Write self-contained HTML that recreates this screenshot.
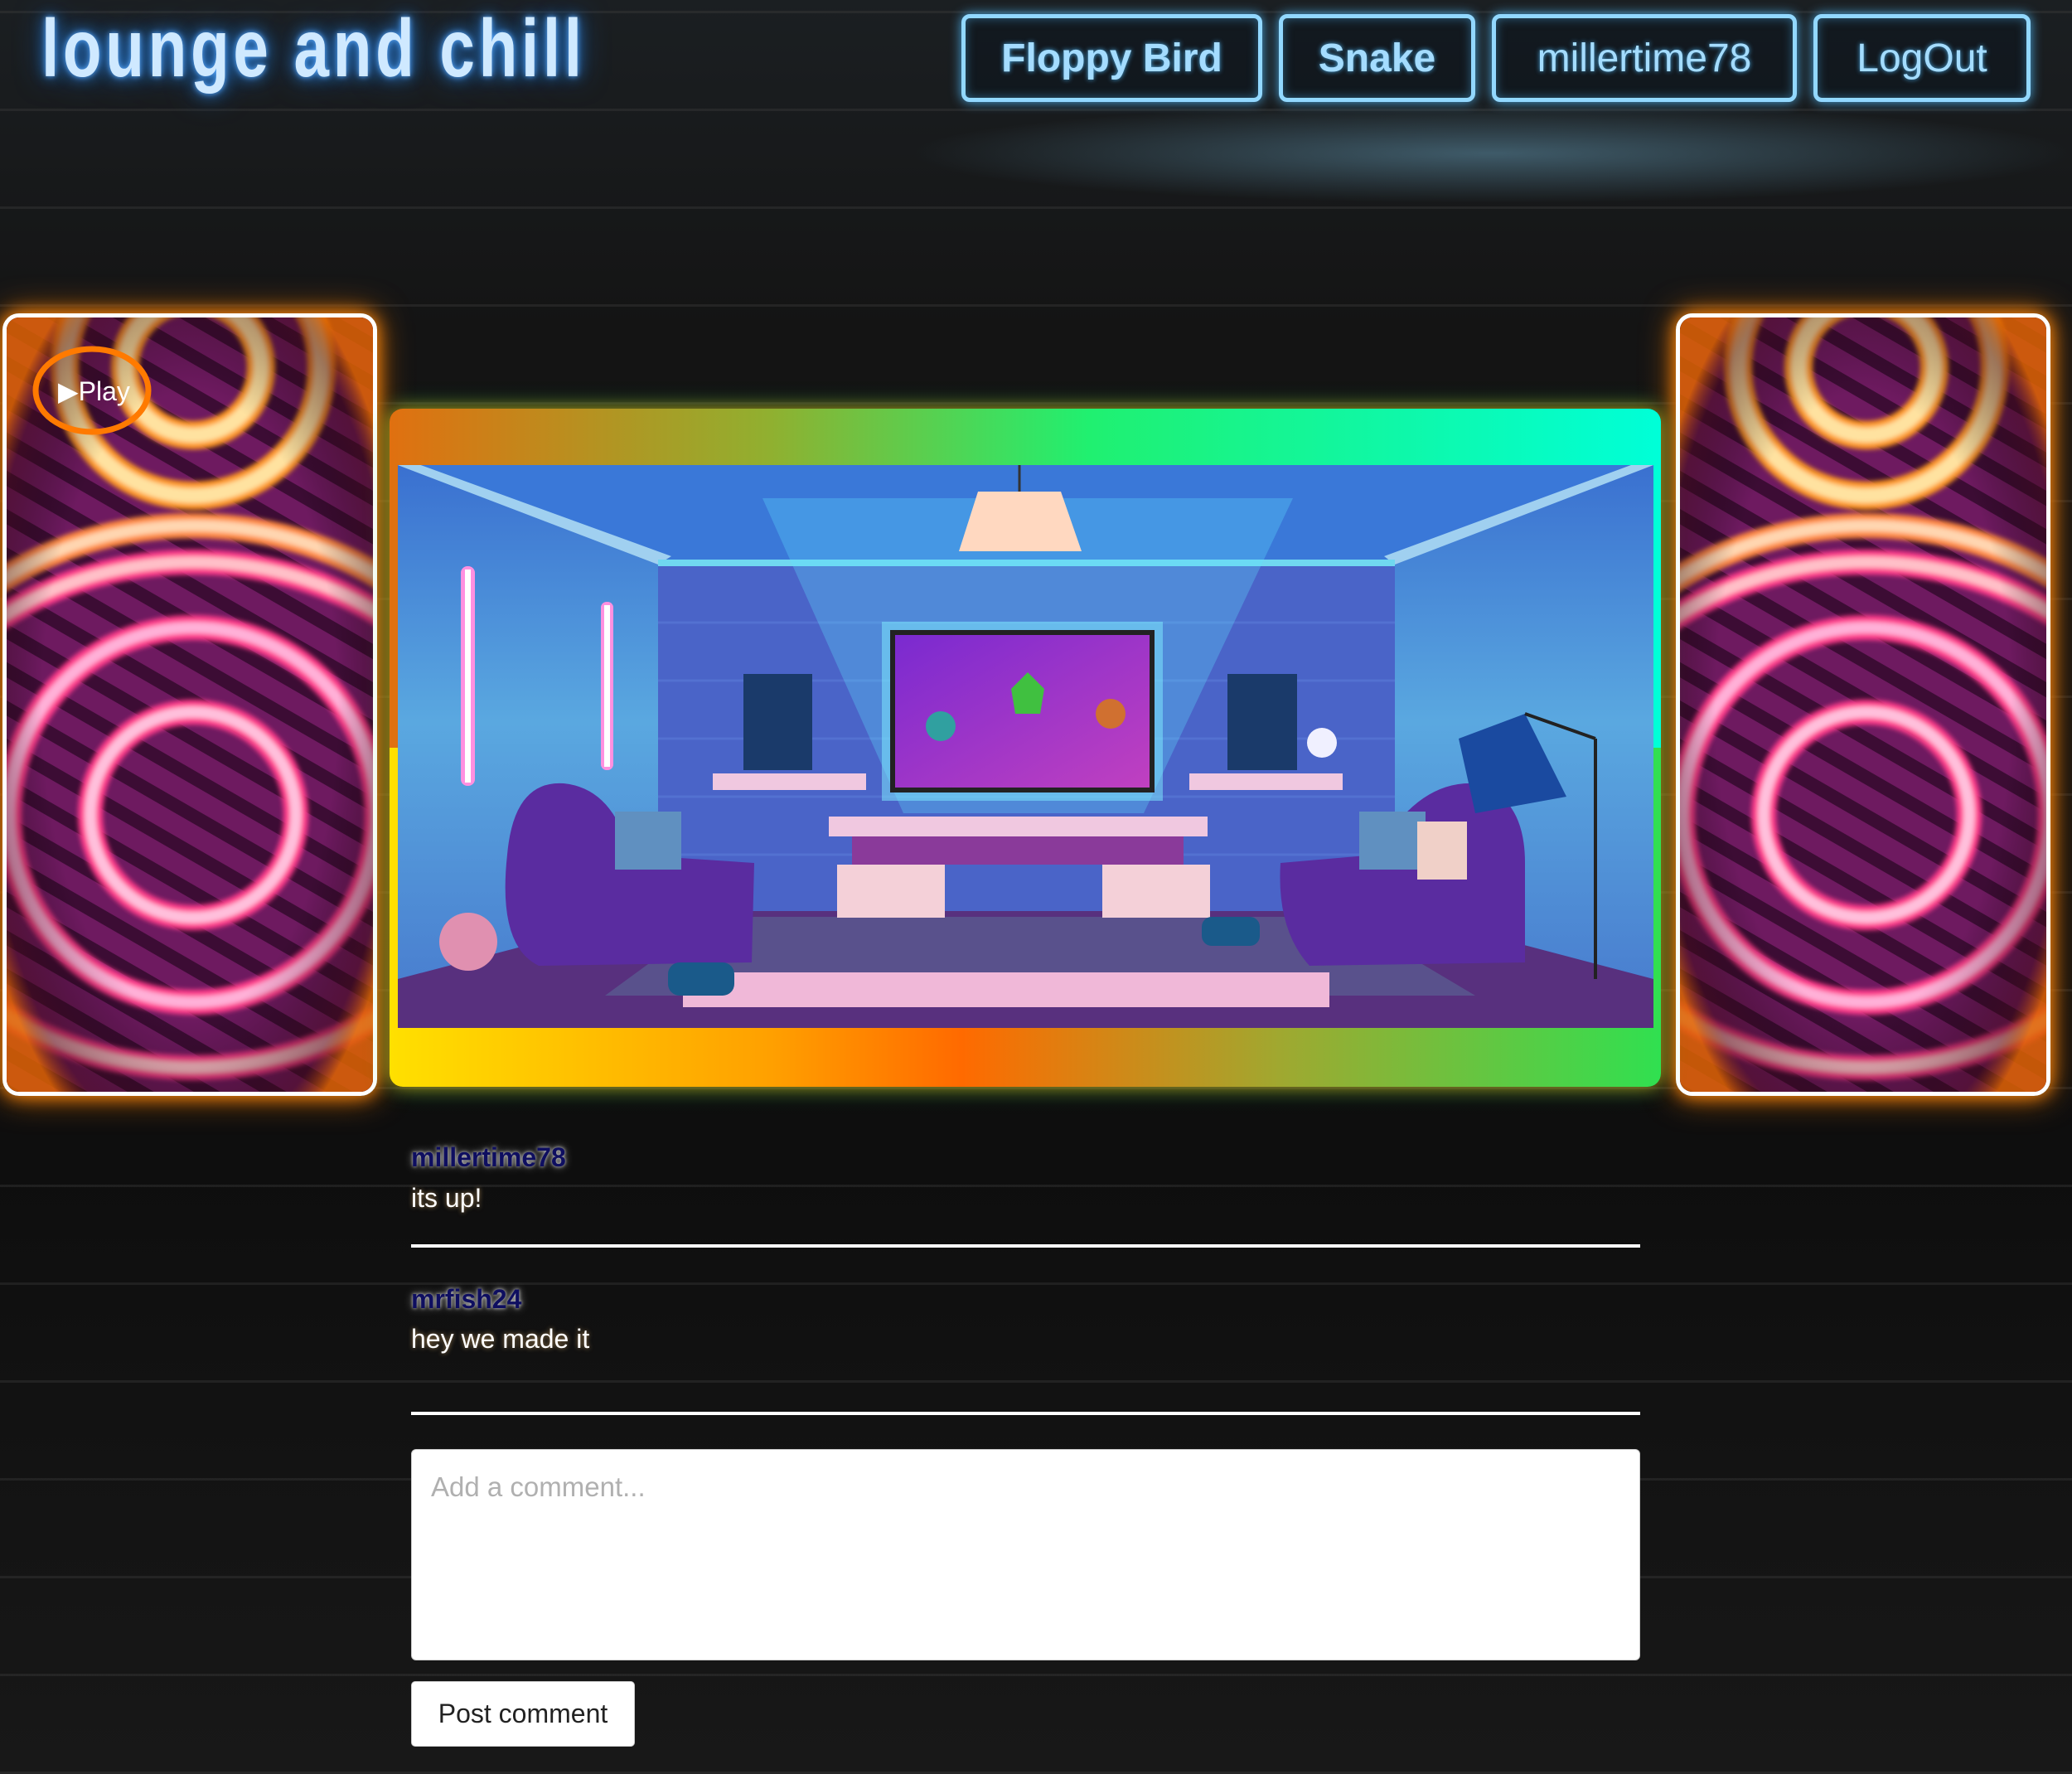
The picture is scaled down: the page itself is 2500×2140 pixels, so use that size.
<!DOCTYPE html>
<html><head><meta charset="utf-8">
<style>
html,body{margin:0;padding:0;}
body{width:2500px;height:2140px;position:relative;overflow:hidden;font-family:"Liberation Sans",sans-serif;
background-color:#131313;
background-image:
radial-gradient(ellipse 700px 60px at 1800px 185px, rgba(110,170,200,0.45), rgba(110,170,200,0) 100%),
repeating-linear-gradient(0deg, rgba(70,70,70,0.3) 0 3px, transparent 3px 118px),
linear-gradient(180deg,#1b1f22 0,#141414 400px,#0e0e0e 1400px,#181818 2140px);
}
.abs{position:absolute;}
.title{left:50px;top:2px;font-size:98px;color:#cfe9ff;font-weight:bold;letter-spacing:6px;transform:scaleX(0.78);transform-origin:left top;white-space:nowrap;
text-shadow:0 0 8px #5aaaff,0 0 20px #2a7ad0,0 0 40px #1a5aa0;}
.btn{position:absolute;top:17px;height:106px;border:5px solid #92d8ff;border-radius:10px;box-sizing:border-box;
color:#a4dcff;font-size:48px;display:flex;align-items:center;justify-content:center;
box-shadow:0 0 14px #4aa8e0, inset 0 0 12px rgba(74,168,224,0.5);background:rgba(10,20,30,0.5);
text-shadow:0 0 6px #4aa8e0;}
.spk{position:absolute;top:378px;width:452px;height:944px;border:5px solid #fff;border-radius:20px;box-sizing:border-box;overflow:hidden;
box-shadow:0 0 20px #ff8a10,0 0 40px #c06000;}
.frame{left:470px;top:493px;width:1534px;height:818px;border-radius:16px;overflow:hidden;
box-shadow:0 0 20px rgba(255,160,0,0.7),0 0 30px rgba(0,255,120,0.4);}
.user{left:496px;font-size:32px;font-weight:bold;color:#0e0e60;text-shadow:0 0 4px rgba(255,255,255,0.8),0 0 10px rgba(255,255,255,0.5);}
.txt{left:496px;font-size:32px;color:#fff;text-shadow:0 0 6px rgba(255,200,120,0.6);}
.line{left:496px;width:1483px;height:4px;background:#fff;}
</style></head><body>
<div class="abs title">lounge and chill</div>
<div class="btn" style="left:1160px;width:363px;font-weight:bold;">Floppy Bird</div>
<div class="btn" style="left:1543px;width:237px;font-weight:bold;">Snake</div>
<div class="btn" style="left:1800px;width:368px;">millertime78</div>
<div class="btn" style="left:2188px;width:262px;">LogOut</div>

<svg width="0" height="0" style="position:absolute">
<defs>
<pattern id="st" width="40" height="40" patternUnits="userSpaceOnUse" patternTransform="rotate(30)"><rect width="40" height="40" fill="#6e1a60"/><rect width="40" height="16" fill="#3c0c34"/></pattern>
<radialGradient id="vg" cx="50%" cy="50%" r="62%"><stop offset="65%" stop-color="rgba(0,0,0,0)"/><stop offset="92%" stop-color="rgba(60,10,20,0.5)"/><stop offset="100%" stop-color="rgba(220,100,0,0.85)"/></radialGradient>
<filter id="gl"><feGaussianBlur stdDeviation="3"/></filter>
</defs>
</svg>

<div class="spk" style="left:3px;">
<svg width="442" height="934" viewBox="0 0 442 934">
<rect width="442" height="934" fill="url(#st)"/>
<g filter="url(#gl)" fill="none">
<circle cx="225" cy="60" r="155" stroke="#ff9a20" stroke-width="34"/>
<circle cx="225" cy="60" r="155" stroke="#ffe2a0" stroke-width="18"/>
<circle cx="225" cy="60" r="82" stroke="#ff9a20" stroke-width="34"/>
<circle cx="225" cy="60" r="82" stroke="#ffe2a0" stroke-width="18"/>
<ellipse cx="225" cy="600" rx="370" ry="305" stroke="#ff3a8a" stroke-width="30"/>
<ellipse cx="225" cy="600" rx="370" ry="305" stroke="#ffc0c8" stroke-width="14"/>
<path d="M-150 560 A370 305 0 0 1 600 560" stroke="#ff8a40" stroke-width="30"/>
<path d="M-150 560 A370 305 0 0 1 600 560" stroke="#ffd6b0" stroke-width="14"/>
<ellipse cx="225" cy="600" rx="222" ry="226" stroke="#ff3a8a" stroke-width="30"/>
<ellipse cx="225" cy="600" rx="222" ry="226" stroke="#ffb0d8" stroke-width="14"/>
<circle cx="225" cy="600" r="124" stroke="#ff3a8a" stroke-width="30"/>
<circle cx="225" cy="600" r="124" stroke="#ffc0dc" stroke-width="14"/>
</g>
<rect width="442" height="934" fill="url(#vg)"/>
<ellipse cx="103" cy="88" rx="68" ry="50" fill="none" stroke="#ff7a00" stroke-width="7"/>
<text x="62" y="100" fill="#fff" font-size="32" font-family="Liberation Sans, DejaVu Sans, sans-serif">▶Play</text>
</svg>
</div>
<div class="spk" style="left:2022px;">
<svg width="442" height="934" viewBox="0 0 442 934">
<rect width="442" height="934" fill="url(#st)"/>
<g filter="url(#gl)" fill="none">
<circle cx="225" cy="60" r="155" stroke="#ff9a20" stroke-width="34"/>
<circle cx="225" cy="60" r="155" stroke="#ffe2a0" stroke-width="18"/>
<circle cx="225" cy="60" r="82" stroke="#ff9a20" stroke-width="34"/>
<circle cx="225" cy="60" r="82" stroke="#ffe2a0" stroke-width="18"/>
<ellipse cx="225" cy="600" rx="370" ry="305" stroke="#ff3a8a" stroke-width="30"/>
<ellipse cx="225" cy="600" rx="370" ry="305" stroke="#ffc0c8" stroke-width="14"/>
<path d="M-150 560 A370 305 0 0 1 600 560" stroke="#ff8a40" stroke-width="30"/>
<path d="M-150 560 A370 305 0 0 1 600 560" stroke="#ffd6b0" stroke-width="14"/>
<ellipse cx="225" cy="600" rx="222" ry="226" stroke="#ff3a8a" stroke-width="30"/>
<ellipse cx="225" cy="600" rx="222" ry="226" stroke="#ffb0d8" stroke-width="14"/>
<circle cx="225" cy="600" r="124" stroke="#ff3a8a" stroke-width="30"/>
<circle cx="225" cy="600" r="124" stroke="#ffc0dc" stroke-width="14"/>
</g>
<rect width="442" height="934" fill="url(#vg)"/>
</svg>
</div>

<div class="abs frame">
<div class="abs" style="left:0;top:0;width:1534px;height:409px;background:linear-gradient(90deg,#e07010 0%,#90b030 30%,#20f070 55%,#00ffd8 100%);"></div>
<div class="abs" style="left:0;top:409px;width:1534px;height:409px;background:linear-gradient(90deg,#ffe000 0%,#ffa000 30%,#ff6a00 45%,#a0a830 70%,#30e050 100%);"></div>
<svg class="abs" style="left:10px;top:68px;" width="1515" height="679" viewBox="0 0 1515 679">
<defs>
<linearGradient id="tv" x1="0" y1="0" x2="1" y2="1"><stop offset="0" stop-color="#7a2ad0"/><stop offset="1" stop-color="#c040c0"/></linearGradient>
<linearGradient id="lw" x1="0" y1="0" x2="0" y2="1"><stop offset="0" stop-color="#3a70d0"/><stop offset="0.5" stop-color="#5aa8e0"/><stop offset="1" stop-color="#4a80d0"/></linearGradient>
</defs>
<rect width="1515" height="679" fill="#3a78d8"/>
<polygon points="0,0 314,120 314,538 0,620" fill="url(#lw)"/>
<polygon points="1515,0 1203,120 1203,538 1515,620" fill="url(#lw)"/>
<polygon points="0,0 314,120 330,110 0,-10" fill="#a0d0f0"/>
<polygon points="1515,0 1203,120 1190,110 1515,-10" fill="#a0d0f0"/>
<rect x="314" y="120" width="889" height="418" fill="#4a64c8"/>
<g stroke="#5a7ad8" stroke-width="3" opacity="0.6">
<line x1="314" y1="190" x2="1203" y2="190"/><line x1="314" y1="260" x2="1203" y2="260"/><line x1="314" y1="330" x2="1203" y2="330"/><line x1="314" y1="400" x2="1203" y2="400"/><line x1="314" y1="470" x2="1203" y2="470"/>
</g>
<rect x="314" y="114" width="889" height="8" fill="#70d8f0"/>
<polygon points="0,620 314,538 1203,538 1515,620 1515,679 0,679" fill="#58307e"/>
<polygon points="250,640 380,545 1140,545 1300,640" fill="#5a5a90" opacity="0.8"/>
<polygon points="440,40 1080,40 900,420 610,420" fill="#60e0ff" opacity="0.3"/>
<line x1="750" y1="0" x2="750" y2="35" stroke="#333" stroke-width="3"/>
<polygon points="700,32 800,32 825,104 677,104" fill="#ffd8c0"/>
<rect x="76" y="122" width="17" height="265" rx="8" fill="#ff90e0"/><rect x="81" y="126" width="7" height="257" fill="#fff"/>
<rect x="245" y="165" width="15" height="203" rx="7" fill="#ff90e0"/><rect x="249" y="169" width="7" height="195" fill="#fff"/>
<rect x="584" y="189" width="339" height="216" fill="#7ff0ff" opacity="0.5"/>
<rect x="594" y="199" width="319" height="196" fill="#222"/>
<rect x="600" y="205" width="307" height="184" fill="url(#tv)"/>
<path d="M740 270 L760 250 L780 270 L775 300 L745 300 Z" fill="#40c040"/>
<circle cx="655" cy="315" r="18" fill="#30a0a0"/>
<circle cx="860" cy="300" r="18" fill="#d07030"/>
<rect x="417" y="252" width="83" height="116" fill="#1a3a6a"/><rect x="1001" y="252" width="84" height="116" fill="#1a3a6a"/>
<rect x="380" y="372" width="185" height="20" fill="#f0c8e0"/><rect x="955" y="372" width="185" height="20" fill="#f0c8e0"/>
<circle cx="1115" cy="335" r="18" fill="#f0f0ff"/>
<rect x="520" y="424" width="457" height="24" fill="#f0c8e0"/>
<rect x="548" y="448" width="400" height="34" fill="#8a3a9a"/>
<rect x="530" y="482" width="130" height="64" fill="#f4d0d8"/><rect x="850" y="482" width="130" height="64" fill="#f4d0d8"/>
<path d="M132 470 Q140 380 200 384 Q260 390 280 470 L430 480 L427 600 L170 604 Q120 580 132 470 Z" fill="#5a2ca0"/>
<path d="M1065 480 L1180 470 Q1230 380 1300 384 Q1360 400 1360 480 L1360 600 L1100 604 Q1060 560 1065 480 Z" fill="#5a2ca0"/>
<rect x="262" y="418" width="80" height="70" fill="#6090c0"/><rect x="1160" y="418" width="80" height="70" fill="#6090c0"/>
<rect x="1230" y="430" width="60" height="70" fill="#f0d0c8"/>
<rect x="344" y="612" width="780" height="42" fill="#f0b8d8"/>
<circle cx="85" cy="575" r="35" fill="#e090b0"/>
<polygon points="1280,330 1360,300 1410,400 1300,420" fill="#1a4aa0"/>
<line x1="1360" y1="300" x2="1445" y2="330" stroke="#222" stroke-width="4"/>
<line x1="1445" y1="330" x2="1445" y2="620" stroke="#222" stroke-width="4"/>
<rect x="326" y="600" width="80" height="40" rx="14" fill="#1a5a8a"/><rect x="970" y="545" width="70" height="35" rx="12" fill="#1a5a8a"/>
</svg>
</div>

<div class="abs user" style="top:1378px;">millertime78</div>
<div class="abs txt" style="top:1427px;">its up!</div>
<div class="abs line" style="top:1501px;"></div>
<div class="abs user" style="top:1549px;">mrfish24</div>
<div class="abs txt" style="top:1597px;">hey we made it</div>
<div class="abs line" style="top:1703px;"></div>
<div class="abs" style="left:496px;top:1748px;width:1483px;height:255px;background:#fff;border-radius:6px;border:1px solid #ccc;box-sizing:border-box;">
<div style="position:absolute;left:23px;top:26px;font-size:33px;color:#b0b0b0;">Add a comment...</div></div>
<div class="abs" style="left:496px;top:2028px;width:270px;height:79px;background:#fff;border-radius:5px;border:1px solid #ccc;box-sizing:border-box;display:flex;align-items:center;justify-content:center;font-size:32px;color:#222;">Post comment</div>
</body></html>
